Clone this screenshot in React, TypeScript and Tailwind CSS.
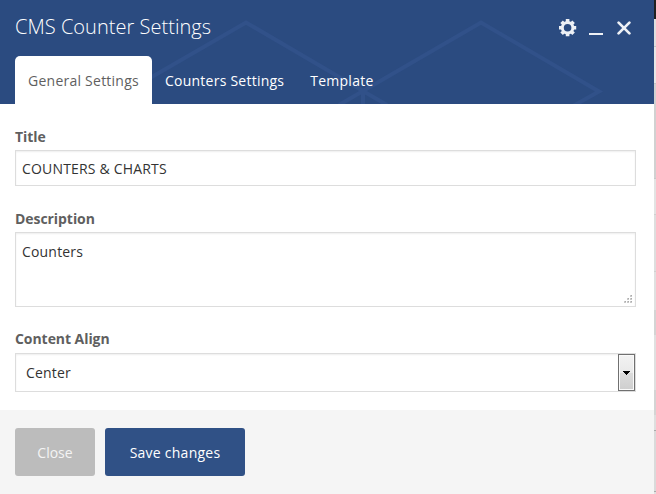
import React from 'react';

const tabs = ['Counters Settings', 'Template'];

function HeaderPattern() {
  return (
    <svg className="pointer-events-none absolute inset-0" width="654" height="104" fill="none" stroke="#315189" strokeWidth="4">
      <path d="M105 104L246 22.5L363 91L481 22.5L599 91.5L573 106" />
      <path d="M339 105L363 91L387 105M363 91V104" />
    </svg>
  );
}

function GearIcon() {
  return (
    <svg width="18" height="18" viewBox="0 0 18 18" fill="none" stroke="#edf0f5">
      <circle cx="8.6" cy="8.7" r="5.3" strokeWidth="3" />
      <g strokeWidth="3.6" transform="translate(8.6 8.7)">
        <path d="M0 -8.6V-5.8M0 5.8V8.6M-8.6 0H-5.8M5.8 0H8.6" />
        <path d="M-6 -6L-4.2 -4.2M4.2 4.2L6 6M6 -6L4.2 -4.2M-4.2 4.2L-6 6" />
      </g>
    </svg>
  );
}

function Header() {
  return (
    <header className="relative h-[104px] bg-[#2b4b80]">
      <HeaderPattern />
      <div className="relative flex h-14 items-start justify-between pl-[15px] pr-[22px]">
        <h1 className="pt-[13px] text-[20px] leading-7 font-light tracking-[0.03px] text-white">CMS Counter Settings</h1>
        <div className="flex items-start pt-[19px]">
          <button aria-label="Settings" className="mr-3"><GearIcon /></button>
          <button aria-label="Minimize" className="mt-[14px] mr-[14px] h-[2px] w-[14px] bg-[#edf0f5]" />
          <button aria-label="Close panel" className="mt-[2px]">
            <svg width="15" height="15" viewBox="0 0 15 15" stroke="#edf0f5" strokeWidth="2.7" strokeLinecap="round">
              <path d="M1.6 1.6l10.8 10.8M12.4 1.6L1.6 12.4" />
            </svg>
          </button>
        </div>
      </div>
      <nav className="relative flex h-12 pl-[15px] text-[14px] leading-[50px] tracking-[0.24px] text-white">
        <button className="h-12 w-[137px] rounded-t-[5px] bg-white text-[#5f5f5f]">General Settings</button>
        {tabs.map((tab) => (
          <button key={tab} className="h-12 px-[13px]">{tab}</button>
        ))}
      </nav>
    </header>
  );
}

function Label({ children }: { children: React.ReactNode }) {
  return <div className="h-[23px] text-[14px] leading-5 font-bold tracking-[-0.06px] text-[#5f5f5f]">{children}</div>;
}

function ResizeGrip() {
  return (
    <svg className="absolute right-[2px] bottom-[2px]" width="9" height="9" fill="#c9c9c9">
      <path d="M6 0h2v2H6zM3 3h2v2H3zM6 3h2v2H6zM0 6h2v2H0zM3 6h2v2H3zM6 6h2v2H6z" />
      <path fill="#aaa" d="M7 0h1v1H7zM4 3h1v1H4zM7 3h1v1H7zM1 6h1v1H1zM4 6h1v1H4zM7 6h1v1H7z" />
    </svg>
  );
}

function Backdrop() {
  return (
    <div className="flex w-[2px] flex-col bg-[#e0e0e0]">
      <div className="h-[19px] bg-[#202020]" />
      <div className="h-7 border-b border-[#c4c4c4] bg-[#dfdfdf]" />
      <div className="h-[37px] border-b border-[#c4c4c4] bg-[#e6e6e6]" />
      <div className="h-[95px] border-b border-[#c8c8c8] bg-[#d1d1d1]" />
      <div className="h-9 border-b border-[#d0d0d0] bg-[#e3e3e3]" />
      <div className="h-[57px] border-b border-[#d0d0d0] bg-[#dedede]" />
      <div className="h-[38px] bg-[#e0e0e0]" />
      <div className="h-[25px] bg-[#d4d4d4]" />
      <div className="h-[55px] bg-[#e0e0e0]" />
      <div className="h-[25px] bg-[#d4d4d4]" />
      <div className="h-4 border-b border-[#aaaaaa] bg-[#dedede]" />
      <div className="h-[61px] border-b border-[#aaaaaa] bg-[#dadada]" />
    </div>
  );
}

export default function App() {
  return (
    <div className="flex h-[494px] w-[656px] overflow-hidden font-['Open_Sans',sans-serif] text-[14px]">
      <main className="flex w-[654px] flex-col bg-white">
        <Header />
        <div className="h-[306px] pt-[23px] pr-[18px] pl-[15px] tracking-[0.18px] text-[#333333]">
          <Label>Title</Label>
          <div className="h-9 border border-[#dddddd] px-[6px] leading-9 shadow-[inset_0_1px_2px_rgba(0,0,0,0.07)]">COUNTERS &amp; CHARTS</div>
          <div className="mt-[23px]"><Label>Description</Label></div>
          <div className="relative h-[75px] border border-[#dddddd] px-[6px] pt-[9px] leading-5 shadow-[inset_0_1px_2px_rgba(0,0,0,0.07)]">
            Counters
            <ResizeGrip />
          </div>
          <div className="mt-[22px]"><Label>Content Align</Label></div>
          <div className="mt-px flex h-[39px] border border-[#dddddd] pl-[10px] leading-[38px] shadow-[inset_0_1px_2px_rgba(0,0,0,0.07)]">
            <span className="flex-1">Center</span>
            <span className="h-[37px] w-[17px] border border-[#707070] bg-[#fafafa] p-px">
              <span className="flex h-[33px] items-center justify-center bg-[linear-gradient(to_bottom,#f2f2f2,#e9e9e9_50%,#dcdcdc_50%,#cfcfcf)]">
                <svg width="7" height="4" fill="#000" shapeRendering="crispEdges"><path d="M0 0h7v1H6v1H5v1H4v1H3V3H2V2H1V1H0z" /></svg>
              </span>
            </span>
          </div>
        </div>
        <footer className="flex h-[84px] gap-[10px] bg-[#f5f5f5] pt-[18px] pl-[15px]">
          <button className="h-12 w-20 rounded-[3px] bg-[#bcbcbc] text-[#f4f4f4]">Close</button>
          <button className="h-12 w-[140px] rounded-[3px] bg-[#305186] tracking-[0.25px] text-white">Save changes</button>
        </footer>
      </main>
      <Backdrop />
    </div>
  );
}
